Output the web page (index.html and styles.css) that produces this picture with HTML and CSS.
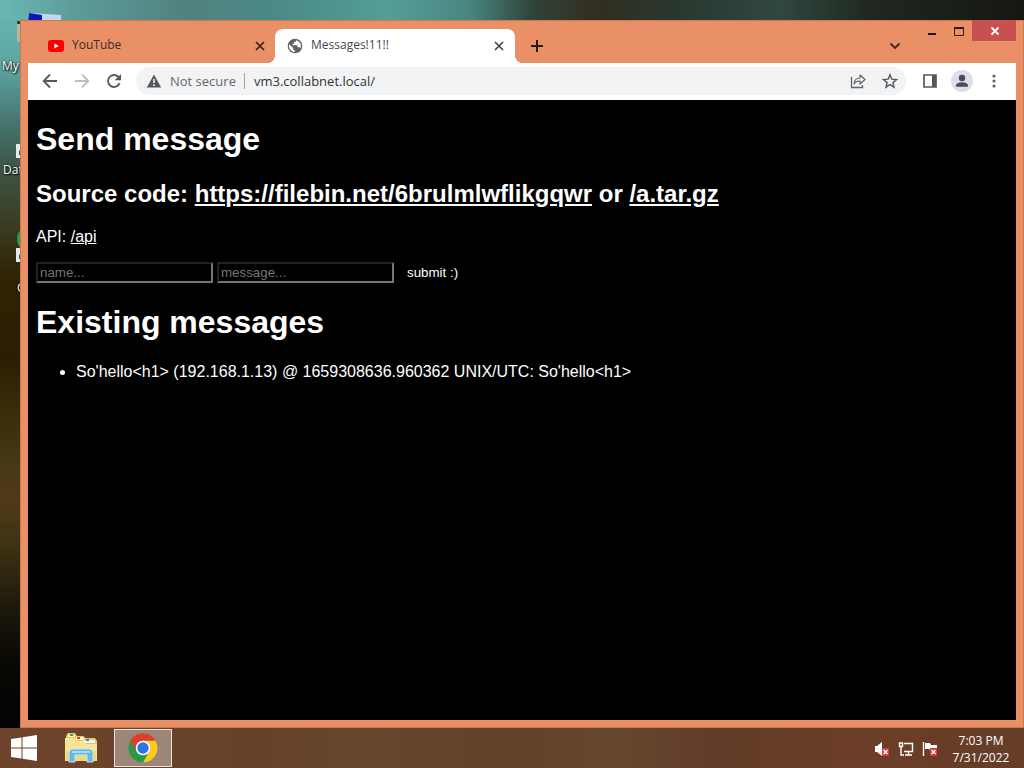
FILE: index.html
```html
<!DOCTYPE html>
<html lang="en">
<head>
<meta charset="utf-8">
<title>Messages!11!!</title>
<link rel="stylesheet" href="styles.css">
</head>
<body>
<div class="desktop">
  <svg class="shortcut shortcut-computer" width="52" height="40" viewBox="0 0 52 40" aria-hidden="true">
    <path d="M20 3 52 5v20H18z" fill="#c3d4f4"/><path d="M20 3 33 5v20H18z" fill="#0a18b8"/>
    <path d="M8 12h8v20H8z" fill="#b9b5a4"/><path d="M8 11h4v3H8z" fill="#3b3b2b"/>
  </svg>
  <span class="shortcut label-computer">My</span>
  <svg class="shortcut shortcut-data" width="12" height="40" viewBox="0 0 12 40" aria-hidden="true">
    <path d="M0 24h12v14H0z" fill="#e8e8e8"/><path d="M3 35v-4l4-3v7" fill="#26548a"/>
  </svg>
  <span class="shortcut label-data">Dat</span>
  <svg class="shortcut shortcut-chrome" width="12" height="40" viewBox="0 0 12 40" aria-hidden="true">
    <circle cx="14" cy="15" r="13" fill="#2f9c4c"/><path d="M0 24h12v14H0z" fill="#e8e8e8"/><path d="M3 35v-4l4-3v7" fill="#26548a"/>
  </svg>
  <span class="shortcut label-chrome">G</span>

  <main class="window">
    <header class="titlebar">
      <div class="tabs" role="tablist">
        <div class="tab" role="tab" aria-selected="false">
          <svg width="16" height="16" viewBox="0 0 16 16" aria-hidden="true"><rect y="2" width="16" height="12" rx="3" fill="#f00"/><path d="m6.300 5.400 4.500 2.600-4.500 2.600z" fill="#fff"/></svg>
          <span class="tab-title">YouTube</span>
          <button class="tab-close" aria-label="Close YouTube"><svg width="10" height="10" viewBox="0 0 10 10"><path d="m1 1 8 8M9 1 1 9" stroke="#32211a" stroke-width="1.700"/></svg></button>
        </div>
        <div class="tab tab-active" role="tab" aria-selected="true">
          <svg width="16" height="16" viewBox="0 0 16 16" aria-hidden="true"><circle cx="8" cy="8" r="7.300" fill="#5f6368"/><path d="M2.300 6.500 6.200 10v1.500l1.500 1V14C4 14 1 10 2.300 6.500zM9 2.200c0 1.500-.7 1.800-2 2v1.500H5.500v1.500h4c1 0 1 .8 1 2H12c.7 0 1.300.5 1.500 1C15 7 13 3.200 9 2.200z" fill="#fff"/></svg>
          <span class="tab-title">Messages!11!!</span>
          <button class="tab-close" aria-label="Close Messages"><svg width="10" height="10" viewBox="0 0 10 10"><path d="m1 1 8 8M9 1 1 9" stroke="#3c4043" stroke-width="1.600"/></svg></button>
        </div>
        <button class="new-tab" aria-label="New tab"><svg width="12" height="12" viewBox="0 0 12 12"><path d="M6 0v12M0 6h12" stroke="#2b1a14" stroke-width="2"/></svg></button>
      </div>
      <button class="tab-search" aria-label="Search tabs"><svg width="12" height="8" viewBox="0 0 12 8"><path d="m1.500 1.500 4.500 4.500 4.500-4.500" fill="none" stroke="#43251a" stroke-width="1.800"/></svg></button>
      <div class="window-controls">
        <button class="control" aria-label="Minimize"><svg width="12" height="12" viewBox="0 0 12 12"><path d="M2 9h8" stroke="#2b1209" stroke-width="2"/></svg></button>
        <button class="control" aria-label="Maximize"><svg width="12" height="12" viewBox="0 0 12 12"><path d="M1.500 2v8.500h9V2" fill="none" stroke="#3a1d10"/><path d="M1 3h10" stroke="#3a1d10" stroke-width="2"/></svg></button>
        <button class="control control-close" aria-label="Close"><svg width="10" height="10" viewBox="0 0 10 10"><path d="m1.500 1.500 7 7M8.500 1.500l-7 7" stroke="#fff" stroke-width="1.800"/></svg></button>
      </div>
    </header>

    <nav class="toolbar" aria-label="Navigation">
      <button class="tool" aria-label="Back"><svg width="16" height="16" viewBox="0 0 16 16"><path d="M15 8H2M8 1.500 1.700 8 8 14.500" fill="none" stroke="#55595d" stroke-width="1.800"/></svg></button>
      <button class="tool" aria-label="Forward"><svg width="16" height="16" viewBox="0 0 16 16"><path d="M1 8h13M8 1.500 14.300 8 8 14.500" fill="none" stroke="#bcbec0" stroke-width="1.800"/></svg></button>
      <button class="tool" aria-label="Reload"><svg width="16" height="16" viewBox="0 0 16 16"><path d="M13.600 10.200A6 6 0 1 1 12.400 3.900L14 5.500" fill="none" stroke="#55595d" stroke-width="1.900"/><path d="M15 1v6.300H8.700z" fill="#55595d"/></svg></button>
      <div class="address">
        <svg width="16" height="16" viewBox="0 0 16 16" aria-hidden="true"><path d="M8 1.500 15.200 14.500H.8z" fill="#55595d"/><path d="M8 6v4M8 11.200v1.800" stroke="#f1f3f4" stroke-width="1.600"/></svg>
        <label class="security" for="url">Not secure</label>
        <input class="url" id="url" type="text" value="vm3.collabnet.local/">
        <button class="address-button" aria-label="Share"><svg width="16" height="16" viewBox="0 0 16 16"><path d="M1.500 4v10.500h11V12" fill="none" stroke="#5f6368" stroke-width="1.300"/><path d="M4 11c.3-4 2.200-6 6-6V2l5 4.500-5 4.500V8C7 8 5.300 8.800 4 11z" fill="none" stroke="#5f6368" stroke-width="1.200" stroke-linejoin="round"/></svg></button>
        <button class="address-button" aria-label="Bookmark"><svg width="16" height="16" viewBox="0 0 16 16"><path d="m8 1.800 1.800 4.300 4.700.4-3.600 3.100 1.100 4.600-4-2.500-4 2.500 1.100-4.600L1.500 6.500l4.700-.4z" fill="none" stroke="#55595d" stroke-width="1.400"/></svg></button>
      </div>
      <button class="tool" aria-label="Side panel"><svg width="16" height="16" viewBox="0 0 16 16"><path d="M2 2h12v12H2z" fill="none" stroke="#55595d" stroke-width="1.700"/><path d="M10 2h4v12h-4z" fill="#55595d"/></svg></button>
      <button class="tool" aria-label="Profile"><svg width="22" height="22" viewBox="0 0 22 22"><circle cx="11" cy="11" r="11" fill="#dcdfe7"/><circle cx="11" cy="8" r="3.200" fill="#474c5e"/><path d="M5 16.800v-1.300c0-2.200 3.500-3.300 6-3.300s6 1.100 6 3.300v1.300z" fill="#474c5e"/></svg></button>
      <button class="tool" aria-label="Menu"><svg width="16" height="16" viewBox="0 0 16 16"><g fill="#5f6368"><circle cx="8" cy="3" r="1.600"/><circle cx="8" cy="8" r="1.600"/><circle cx="8" cy="13" r="1.600"/></g></svg></button>
    </nav>

    <section class="page">
      <h1>Send message</h1>
      <h2>Source code: <a href="#">https://filebin.net/6brulmlwflikgqwr</a> or <a href="#">/a.tar.gz</a></h2>
      <p>API: <a href="#">/api</a></p>
      <form class="message-form">
        <input class="field" type="text" placeholder="name..." aria-label="name">
        <input class="field" type="text" placeholder="message..." aria-label="message">
        <button class="submit" type="button">submit :)</button>
      </form>
      <h1>Existing messages</h1>
      <ul>
        <li>So'hello&lt;h1&gt; (192.168.1.13) @ 1659308636.960362 UNIX/UTC: So'hello&lt;h1&gt;</li>
      </ul>
    </section>
  </main>
</div>

<footer class="taskbar">
  <button class="task task-start" aria-label="Start"><svg width="28" height="28" viewBox="0 0 28 28"><path d="M1 5 11.500 3.400V13.400H1zM12.500 3.200 27 1v12.400H12.500zM1 14.500h10.500v10L1 23zM12.500 14.500H27V27l-14.500-2.200z" fill="#fff"/></svg></button>
  <button class="task" aria-label="File Explorer"><svg width="34" height="32" viewBox="0 0 34 32"><path d="M2 4 4 1h7l2 3h7l1 2h10l2 3v20H2z" fill="#e3c866"/><path d="M4 2h6l1 3H4z" fill="#f7f3d3"/><path d="M12 5h7l1 3h-8z" fill="#fff6e2"/><path d="M20 8h11v3H20z" fill="#eaf5f8"/><path d="M6 2h3v2H6z" fill="#3a9b4b"/><path d="M13 5h3v2h-3z" fill="#d8462b"/><path d="M22 7h3v2h-3z" fill="#2f81c9"/><path d="M1 6h10l2 3h7l2 3h11v17H1z" fill="#f7e595"/><path d="M2 19h30v10H2z" fill="#efd779"/><path d="M5 30v-9q0-4 4-4h16q4 0 4 4v9h-6v-7H11v7z" fill="#65b8e5" stroke="#c1e8f8"/><path d="M8 19h18v2H8z" fill="#a4dcf5"/></svg></button>
  <button class="task task-active" aria-label="Google Chrome"><svg width="30" height="30" viewBox="0 0 30 30"><circle cx="15" cy="15" r="14.500" fill="#299a4b"/><path d="M2.440 7.750A14.500 14.500 0 0 1 27.560 7.750H15L8.700 18.600z" fill="#e33b2e"/><path d="M27.560 7.750A14.500 14.500 0 0 1 15 29.500L21.300 18.600 15 7.750z" fill="#fbc91f"/><circle cx="15" cy="15" r="7.300" fill="#fff"/><circle cx="15" cy="15" r="5.700" fill="#2e74e5"/></svg></button>
  <div class="tray">
    <button class="tray-button" aria-label="Volume muted"><svg width="16" height="16" viewBox="0 0 16 16"><path d="M1 5h2l5-4v14l-5-4H1z" fill="#fff"/><path d="M8 7h7v8H8z" fill="#d93a40"/><path d="m9.500 9 4 4m0-4-4 4" stroke="#fff" stroke-width="1.500"/></svg></button>
    <button class="tray-button" aria-label="Network"><svg width="16" height="16" viewBox="0 0 16 16"><path d="M6 2.500h8.500v8H6M10.500 10.500v3M7 14h7M3 6v8h3M1.500 2v3.500h3V2z" fill="none" stroke="#fff" stroke-width="1.400"/></svg></button>
    <button class="tray-button" aria-label="Action Center"><svg width="16" height="16" viewBox="0 0 16 16"><path d="M1.500 1v14" stroke="#fff" stroke-width="1.400"/><path d="M3 2h5l1 2h6v5H8L7 8H3z" fill="#fff"/><path d="M8 7h7v8H8z" fill="#d93a40"/><path d="m9.500 9 4 4m0-4-4 4" stroke="#fff" stroke-width="1.500"/></svg></button>
    <div class="clock"><time>7:03 PM</time><time>7/31/2022</time></div>
  </div>
</footer>
</body>
</html>
```
FILE: styles.css
```css
* { box-sizing: border-box; }
body {
  margin: 0;
  height: 100vh;
  display: flex;
  flex-direction: column;
  overflow: hidden;
  font-family: "Open Sans", "Noto Sans", sans-serif;
}
button { border: 0; padding: 0; background: transparent; display: flex; align-items: center; justify-content: center; }
svg { display: block; flex: none; }

.desktop {
  position: relative;
  flex: 1;
  min-height: 0;
  display: flex;
  padding: 20px 0 0 20px;
  background:
    linear-gradient(90deg, #69b8b5 0%, #5b9a98 8%, #52827f 18%, #4a8a87 27%, #559d98 38%, #48857f 46%, #2f4438 52%, #332e20 58%, #29372f 66%, #31483f 76%, #202820 85%, #151711 100%) top / 100% 20px no-repeat,
    linear-gradient(180deg, #69b8b5 0%, #5ca5a3 9%, #46746f 17%, #3e5548 23%, #3b3f25 30%, #302304 38%, #2a1f03 49%, #3c300a 58%, #463914 64%, #513917 69%, #393011 76%, #1c170a 84%, #070704 92%, #030303 100%);
}
.shortcut { position: absolute; color: #fff; font-size: 12px; line-height: 16px; text-shadow: 1px 1px 2px #000, 0 0 2px #000; }
.shortcut-computer { left: 9px; top: 10px; }
.label-computer { left: 2px; top: 58px; }
.shortcut-data { left: 16px; top: 120px; }
.label-data { left: 3px; top: 162px; }
.shortcut-chrome { left: 16px; top: 224px; }
.label-chrome { left: 17px; top: 280px; }

.window {
  position: relative;
  flex: 1;
  min-width: 0;
  display: flex;
  flex-direction: column;
  padding: 0 8px 8px;
  background: #e99066;
  box-shadow: inset 0 0 0 1px #c87850;
}
.titlebar { display: flex; height: 43px; flex: none; align-items: flex-start; }
.tabs { display: flex; flex: 1; align-items: center; padding: 9px 0 0 8px; }
.tab { display: flex; flex: 0 1 239px; align-items: center; gap: 8px; height: 34px; padding: 0 9px 0 12px; color: #3d2b24; font-size: 12px; }
.tab-active { position: relative; flex-basis: 240px; padding-right: 10px; background: #fff; border-radius: 8px 8px 0 0; color: #45494d; }
.tab-active::before, .tab-active::after { content: ""; position: absolute; bottom: 0; width: 8px; height: 8px; }
.tab-active::before { right: 100%; background: radial-gradient(circle at 0 0, transparent 8px, #fff 8px); }
.tab-active::after { left: 100%; background: radial-gradient(circle at 100% 0, transparent 8px, #fff 8px); }
.tab-title { flex: 1; line-height: 16px; padding-bottom: 2px; }
.tab-close { width: 12px; height: 16px; }
.new-tab { width: 28px; height: 28px; margin-left: 8px; }
.tab-search { width: 28px; height: 28px; margin: 12px 9px 0 0; }
.window-controls { display: flex; }
.control { width: 27px; height: 21px; }
.control-close { width: 44px; padding-left: 2px; background: #c75050; }

.toolbar { display: flex; flex: none; align-items: center; height: 37px; padding: 0 6px 2px; background: #fff; }
.tool { width: 32px; height: 28px; }
.address { display: flex; flex: 1; min-width: 0; align-items: center; height: 28px; margin: 0 8px 0 6px; padding-left: 10px; border-radius: 14px; background: #f1f3f4; font-size: 13px; }
.security { margin-left: 8px; padding-right: 8px; border-right: 1px solid #9fa3a7; line-height: 16px; color: #66696d; white-space: nowrap; }
.url { flex: 1; min-width: 0; border: 0; padding: 0 0 0 9px; background: transparent; font: inherit; color: #303336; }
.address-button { width: 32px; height: 28px; }

.page { flex: 1; min-height: 0; overflow: auto; padding: 0 8px; background: #000; color: #fff; font-family: "Liberation Sans", Arial, sans-serif; font-size: 16px; }
.page a { color: #fff; }
h1 { margin: 21px 0 22px; font-size: 32px; line-height: 37px; }
h2 { margin: 20px 0; font-size: 24px; line-height: 28px; }
p { margin: 16px 0; line-height: 18px; }
.message-form { display: flex; gap: 4px; align-items: center; }
.field { width: 177px; padding: 1px 2px; border: 2px inset #767676; background: #000; color: #fff; font-family: inherit; }
.field::placeholder { color: #757575; }
.submit { margin-left: 9px; color: #fff; font-family: inherit; }
ul { margin: 22px 0; padding-left: 40px; line-height: 18px; }

.taskbar { display: flex; flex: none; height: 40px; background: linear-gradient(90deg, #6e432b 0%, #66412a 25%, #67462e 35%, #63402a 50%, #664730 60%, #613b27 70%, #6b3e28 85%, #653d28 100%); }
.task { width: 58px; height: 38px; margin: 1px 2px 0; }
.task-start { width: 48px; margin: 1px 2px 0 0; }
.task-active { border: 1px solid #eee3dc; background: #9c8678; }
.tray { display: flex; align-items: center; gap: 8px; margin-left: auto; padding: 2px 14px 0 0; }
.tray-button { width: 16px; height: 16px; }
.clock { display: flex; flex-direction: column; align-items: center; width: 58px; margin-left: 6px; color: #fff; font-size: 12px; line-height: 17px; }
```
